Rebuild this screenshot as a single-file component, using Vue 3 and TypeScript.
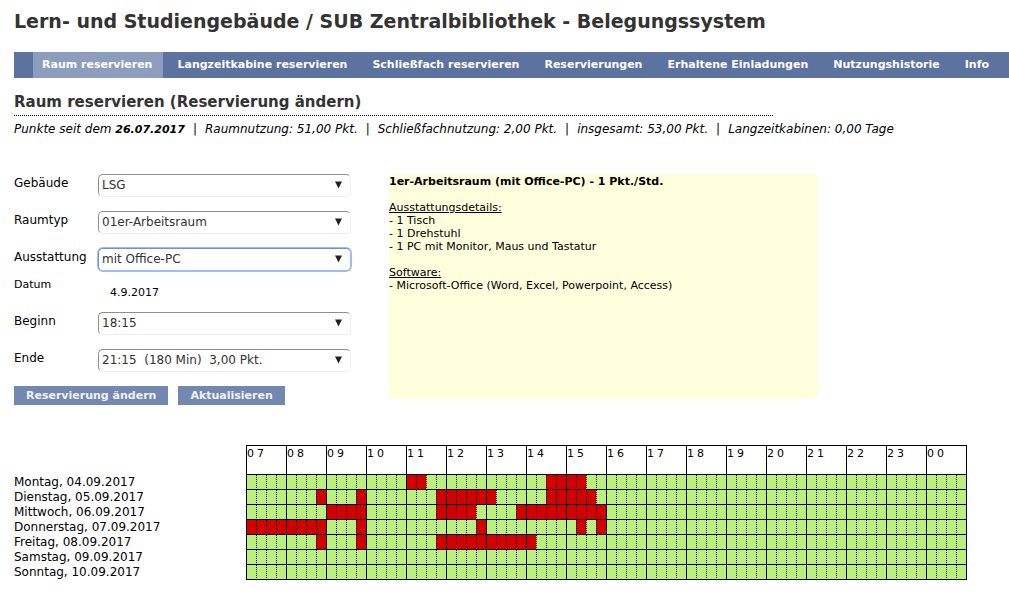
<script setup lang="ts">
import { ref } from 'vue'

interface Field {
  id: string
  label: string
  options?: string[]
  text?: string
}

interface Day {
  label: string
  busy: [number, number][]
}

const navItems = [
  'Raum reservieren',
  'Langzeitkabine reservieren',
  'Schließfach reservieren',
  'Reservierungen',
  'Erhaltene Einladungen',
  'Nutzungshistorie',
  'Info',
]
const active = ref(0)

const points = [
  'Raumnutzung: 51,00 Pkt.',
  'Schließfachnutzung: 2,00 Pkt.',
  'insgesamt: 53,00 Pkt.',
  'Langzeitkabinen: 0,00 Tage',
]

const fields: Field[] = [
  { id: 'gebaeude', label: 'Gebäude', options: ['LSG'] },
  { id: 'raumtyp', label: 'Raumtyp', options: ['01er-Arbeitsraum'] },
  { id: 'ausstattung', label: 'Ausstattung', options: ['mit Office-PC'] },
  { id: 'datum', label: 'Datum', text: '4.9.2017' },
  { id: 'beginn', label: 'Beginn', options: ['18:15'] },
  { id: 'ende', label: 'Ende', options: ['21:15\u00a0 (180 Min)\u00a0 3,00 Pkt.'] },
]
const current = ref('ausstattung')

const hours = Array.from({ length: 18 }, (_, i) => String((i + 7) % 24).padStart(2, '0'))

// Busy ranges are counted in quarter hours from 07:00, end exclusive.
const days: Day[] = [
  { label: 'Montag, 04.09.2017', busy: [[16, 18], [30, 34]] },
  { label: 'Dienstag, 05.09.2017', busy: [[7, 8], [11, 12], [19, 25], [30, 35]] },
  { label: 'Mittwoch, 06.09.2017', busy: [[8, 12], [19, 23], [27, 36]] },
  { label: 'Donnerstag, 07.09.2017', busy: [[0, 8], [11, 12], [23, 24], [33, 34], [35, 36]] },
  { label: 'Freitag, 08.09.2017', busy: [[7, 8], [11, 12], [19, 29]] },
  { label: 'Samstag, 09.09.2017', busy: [] },
  { label: 'Sonntag, 10.09.2017', busy: [] },
]

const isBusy = (day: Day, slot: number): boolean =>
  day.busy.some(([from, to]) => slot >= from && slot < to)
</script>

<template>
  <div class="page">
    <h1>Lern- und Studiengebäude / SUB Zentralbibliothek - Belegungssystem</h1>

    <nav class="nav">
      <a
        v-for="(item, i) in navItems"
        :key="item"
        href="#"
        :class="{ active: i === active }"
        @click.prevent="active = i"
      >{{ item }}</a>
    </nav>

    <h2>Raum reservieren (Reservierung ändern)</h2>
    <p class="points">
      <span>Punkte seit dem <strong>26.07.2017</strong></span>
      <template v-for="p in points" :key="p">
        <span>|</span>
        <span>{{ p }}</span>
      </template>
    </p>

    <div class="booking">
      <form class="form" @submit.prevent>
        <div v-for="f in fields" :key="f.id" class="row" :class="{ date: f.text }">
          <template v-if="f.options">
            <label :for="f.id">{{ f.label }}</label>
            <span class="select" :class="{ current: f.id === current }">
              <select :id="f.id" @focus="current = f.id">
                <option v-for="o in f.options" :key="o">{{ o }}</option>
              </select>
              <svg class="arrow" viewBox="0 0 8 8" aria-hidden="true"><path d="M0 0H8L4 8Z" /></svg>
            </span>
          </template>
          <template v-else>
            <label :for="f.id">{{ f.label }}</label>
            <output :id="f.id">{{ f.text }}</output>
          </template>
        </div>
        <div class="actions">
          <button type="submit">Reservierung ändern</button>
          <button type="button">Aktualisieren</button>
        </div>
      </form>

      <aside class="info">
        <h3>1er-Arbeitsraum (mit Office-PC) - 1 Pkt./Std.</h3>
        <h4>Ausstattungsdetails:</h4>
        <p>- 1 Tisch</p>
        <p>- 1 Drehstuhl</p>
        <p>- 1 PC mit Monitor, Maus und Tastatur</p>
        <h4>Software:</h4>
        <p>- Microsoft-Office (Word, Excel, Powerpoint, Access)</p>
      </aside>
    </div>

    <table class="plan">
      <thead>
        <tr>
          <td class="corner"></td>
          <th v-for="h in hours" :key="h" colspan="4" scope="col">{{ h }}</th>
        </tr>
      </thead>
      <tbody>
        <tr v-for="d in days" :key="d.label">
          <th scope="row">{{ d.label }}</th>
          <td
            v-for="n in 72"
            :key="n"
            class="slot"
            :class="{ busy: isBusy(d, n - 1), hour: n % 4 === 1 }"
          ></td>
        </tr>
      </tbody>
    </table>
  </div>
</template>

<style>
body {
  margin: 0;
  background: #fff;
}
</style>

<style scoped>
.page {
  padding: 8px 0 0 14px;
  font-family: Verdana, "DejaVu Sans", sans-serif;
  font-size: 12px;
  line-height: 15px;
  color: #000;
}

h1,
h2,
h3,
h4,
p {
  margin: 0;
}

h1 {
  font-size: 19px;
  line-height: 26px;
  color: #333;
}

.nav {
  display: flex;
  gap: 5px;
  margin-top: 18px;
  padding-left: 19px;
  background: #5c729f;
}

.nav a {
  padding: 0 11px 0 9px;
  font-size: 11px;
  font-weight: bold;
  line-height: 26px;
  color: #fff;
  text-decoration: none;
  white-space: nowrap;
}

.nav a.active {
  background: #8d9dbd;
}

h2 {
  max-width: 759px;
  margin-top: 14px;
  padding-bottom: 3px;
  border-bottom: 1px dotted #000;
  font-size: 15px;
  line-height: 20px;
  color: #333;
}

.points {
  display: flex;
  flex-wrap: wrap;
  column-gap: 8px;
  margin-top: 6px;
  font-style: italic;
}

.points strong {
  font-size: 11px;
}

.booking {
  display: flex;
  gap: 38px;
  margin-top: 37px;
}

.form {
  flex: 0 0 337px;
}

.row {
  display: grid;
  grid-template-columns: 84px 1fr;
  height: 37px;
}

.row label {
  padding-top: 2px;
}

.row.date {
  height: 27px;
  font-size: 11px;
}

.row.date label {
  padding-top: 0;
  margin-top: -8px;
}

.row.date output {
  padding-left: 12px;
}

.select {
  position: relative;
  height: 23px;
}

.select select {
  appearance: none;
  box-sizing: border-box;
  width: 100%;
  height: 23px;
  padding: 0 20px 0 3px;
  border: 1px solid;
  border-color: #8e8e8e #ededed #ededed #8e8e8e;
  border-radius: 5px;
  outline: none;
  background: #fff;
  font: inherit;
  color: #333;
}

.select.current select {
  box-shadow: 0 0 0 1px #9dbdf5;
  border-color: #6f93cf #9dbdf5 #9dbdf5 #6f93cf;
}

.arrow {
  position: absolute;
  top: 7px;
  right: 9px;
  width: 7px;
  height: 8px;
  fill: #222;
  pointer-events: none;
}

.actions {
  display: flex;
  gap: 10px;
}

button {
  height: 19px;
  padding: 0 12px;
  border: 0;
  background: #7388b0;
  font-family: inherit;
  font-size: 11px;
  font-weight: bold;
  line-height: 19px;
  color: #f2f2f2;
  white-space: nowrap;
}

.info {
  flex: 0 1 429px;
  box-sizing: border-box;
  min-height: 225px;
  align-self: flex-start;
  border-radius: 5px;
  background: #ffffde;
  font-size: 11px;
  line-height: 13px;
}

.info h3 {
  padding-top: 1px;
  font-size: 11px;
}

.info h4 {
  margin-top: 13px;
  font-size: 11px;
  font-weight: normal;
  text-decoration: underline;
}

.plan {
  width: 953px;
  margin-top: 40px;
  border-spacing: 0;
  table-layout: fixed;
}

.plan td,
.plan th {
  padding: 0;
  font-weight: normal;
  text-align: left;
  vertical-align: top;
}

.plan .corner {
  width: 232px;
}

.plan thead th {
  height: 28px;
  border: solid #000;
  border-width: 1px 0 1px 1px;
  font-size: 11px;
  line-height: 15px;
  letter-spacing: 3px;
}

.plan tr > :last-child {
  border-right: 1px solid #000;
}

.plan tbody th {
  line-height: 15px;
}

.slot {
  border-left: 1px dotted #000;
  border-bottom: 1px solid #000;
  background: #b9f17c;
}

.slot.hour {
  border-left-style: solid;
}

.slot.busy {
  background: #d20000;
}
</style>
